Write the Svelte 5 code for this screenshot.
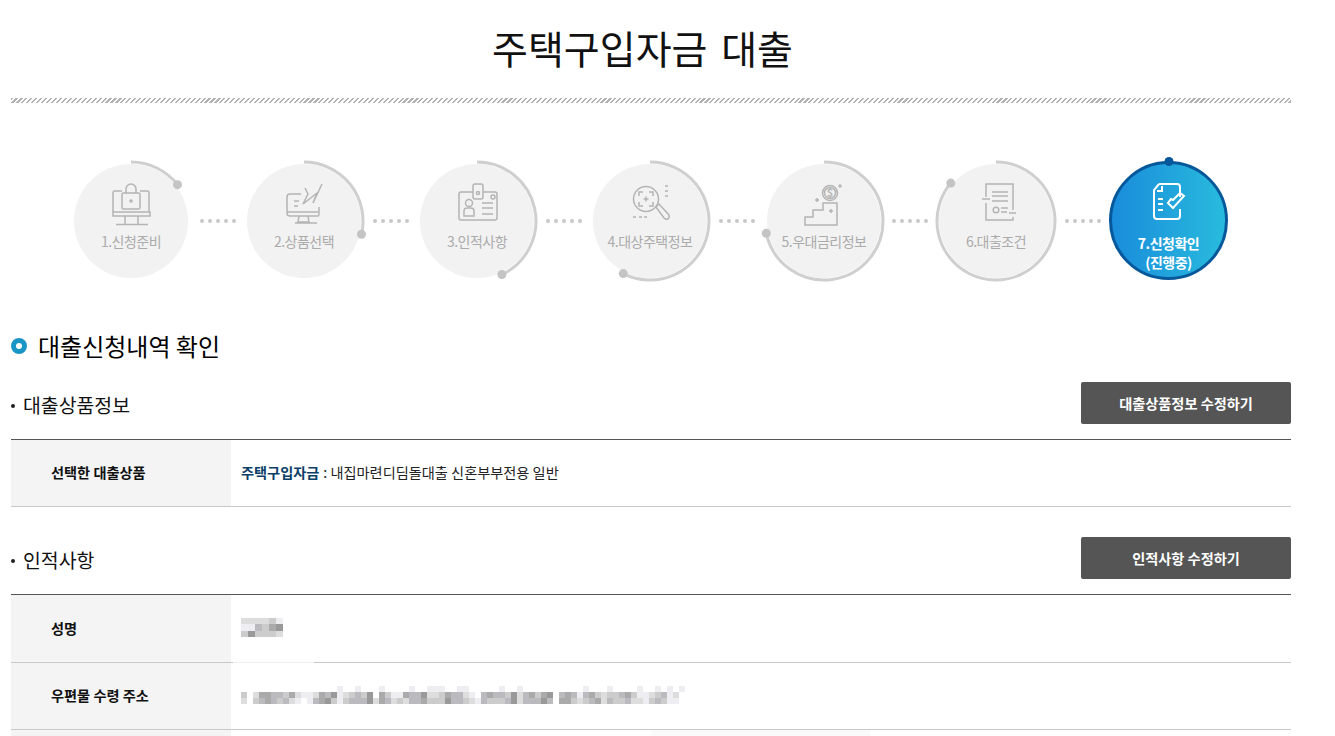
<script>
	const R = 59

	// angle is measured clockwise from the top of the circle
	function point(deg) {
		const a = (deg * Math.PI) / 180
		return [R * Math.sin(a), -R * Math.cos(a)]
	}

	function arcPath(deg) {
		const [x, y] = point(deg)
		return `M0 ${-R} A${R} ${R} 0 ${deg > 180 ? 1 : 0} 1 ${x.toFixed(2)} ${y.toFixed(2)}`
	}

	const steps = [
		{ label: '1.신청준비', deg: 52, before: 0, after: 12 },
		{ label: '2.상품선택', deg: 103, before: 11, after: 12 },
		{ label: '3.인적사항', deg: 155, before: 11, after: 12 },
		{ label: '4.대상주택정보', deg: 207, before: 11, after: 12 },
		{ label: '5.우대금리정보', deg: 258, before: 12, after: 11 },
		{ label: '6.대출조건', deg: 310, before: 11, after: 12 }
	]

	// mosaic of the masked personal data: 0 is white, 9 is the darkest grey
	function shade(c) {
		const n = Number(c)
		const v = 255 - n * 17
		return `rgb(${v},${v},${v + (n % 3 === 1 ? 4 : 0)})`
	}

	const nameMosaic = ['222231', '114356', '363332']
	const addressMosaic = [
		'000000000000000010010001000010011100110000010010000000000100010000100101010',
		'302554435211254612343605311544622354421045443624535604541453233453112341201',
		'203454342101456313444625423244533364432143334624446405532345243342213431100'
	]
</script>

<div class="page">
	<h1>주택구입자금 대출</h1>
	<div class="hatch"></div>

	<div class="steps">
		{#each steps as step, i}
			<div class="circle" style="margin-left: {step.before}px">
				<svg class="overlay" viewBox="-62 -62 124 124" width="124" height="124">
					<path class="arc" d={arcPath(step.deg)} />
					<circle class="knob" cx={point(step.deg)[0]} cy={point(step.deg)[1]} r="4.5" />
					<g class="icon">
						{#if i === 0}
							<path d="M-9 -30H-16Q-18 -30 -18 -28V-9M9 -30H16Q18 -30 18 -28V-9" />
							<rect x="-9" y="-28" width="18" height="16" rx="1.5" />
							<path d="M-5 -28V-32A5 5 0 0 1 5 -32V-28" />
							<circle cx="0" cy="-20" r="1" />
							<rect x="-18" y="-9" width="37" height="4" />
							<path d="M-6 -5V3M7 -5V3M-15 3.500H17" />
						{:else if i === 1}
							<path d="M-3 -27H-14Q-17 -27 -17 -24V-8Q-17 -5 -14 -5H14Q15 -5 15 -8V-14M-17 -9H14" />
							<path d="M-5 -5L-6 1H5L4 -5M-9 2H13M-10 -20H-5M-10 -15H-6" />
							<path d="M1 -33L4 -27L-1 -17L13 -28L9 -18L18 -37" />
						{:else if i === 2}
							<rect x="-18" y="-29" width="38" height="28" rx="2" />
							<rect x="-4" y="-37" width="10" height="15" rx="2" fill="#f2f2f2" />
							<circle cx="1" cy="-28" r="1.500" />
							<circle cx="16" cy="-24" r="2" />
							<circle cx="-8" cy="-18" r="3.500" />
							<path d="M-13 -5V-10Q-13 -13 -10 -13H-6Q-3 -13 -3 -10V-5ZM5 -18H16M5 -13H16M5 -7H16" />
						{:else if i === 3}
							<circle cx="-4" cy="-22" r="12.500" />
							<path d="M-11 -25V-29H-7M-1 -29H3V-25M3 -19V-15H-1M-7 -15H-11V-19M-6.500 -22H-1.500M-4 -24.500V-19.500" />
							<path d="M6 -14L9 -17L19 -6Q20 -4 18 -2Q16 -1 14 -3ZM-17 -4H-14M-11 -4H-8M-6 -4H-3M15 -35H18M15 -30H18M15 -25H18" />
						{:else if i === 4}
							<circle cx="6" cy="-28" r="7.500" />
							<circle cx="6" cy="-28" r="5.500" />
							<path d="M-19 4V-4H-11V-11H-1V-18H13V4ZM5 -10H9M7 -12V-8M-9 -21H-5M-7 -23V-19" />
							<text x="6" y="-24.500" text-anchor="middle" class="dollar">$</text>
							<circle cx="16" cy="-35" r="1" />
						{:else}
							<path d="M-10 -24V-37H17V-11M17 -4V-1H-10V-18M-14 -22H-6M-4 -29H12M-4 -25H12M-4 -20H12M5 -13H12M5 -9H11M13 -8H20" />
							<circle cx="0" cy="-11" r="2.800" />
						{/if}
					</g>
				</svg>
				<span class="label">{step.label}</span>
			</div>
			<div class="dots" style="margin-left: {step.after}px">
				<i></i><i></i><i></i><i></i><i></i>
			</div>
		{/each}

		<div class="circle current">
			<svg class="overlay" viewBox="-62 -62 124 124" width="124" height="124">
				<circle class="knob" cx="0" cy="-59.500" r="4.500" />
				<g class="icon white">
					<path d="M-10 -37H8Q11 -37 11 -34V-24M11 -12V-5Q11 -2 8 -2H-12Q-15 -2 -15 -5V-31L-10 -37M-7 -35V-30H-12M-11 -22H-6M-11 -17H-6M-11 -11H-6" />
					<path d="M-1 -18L4 -13L15 -25L11 -28L4 -21L2 -22Z" />
				</g>
			</svg>
			<span class="label">7.신청확인<br />(진행중)</span>
		</div>
	</div>

	<h2><span class="ring"></span>대출신청내역 확인</h2>

	<div class="sectionHead first">
		<h3>대출상품정보</h3>
		<button>대출상품정보 수정하기</button>
	</div>
	<div class="table">
		<div class="row">
			<div class="th">선택한 대출상품</div>
			<div class="td"><strong>주택구입자금</strong> : 내집마련디딤돌대출 신혼부부전용 일반</div>
		</div>
	</div>

	<div class="sectionHead">
		<h3>인적사항</h3>
		<button>인적사항 수정하기</button>
	</div>
	<div class="table">
		<div class="row nameRow">
			<div class="th">성명</div>
			<div class="td">
				<svg class="mosaic" width="42" height="19" shape-rendering="crispEdges">
					{#each nameMosaic as line, y}
						{#each line as c, x}
							<rect x={x * 7} y={y * 6.4} width="7" height="6.4" fill={shade(c)} />
						{/each}
					{/each}
				</svg>
			</div>
			<span class="lineGap"></span>
		</div>
		<div class="row">
			<div class="th">우편물 수령 주소</div>
			<div class="td">
				<svg class="mosaic" width="444" height="18" shape-rendering="crispEdges">
					{#each addressMosaic as line, y}
						{#each line as c, x}
							<rect x={x * 6} y={y * 6} width="6" height="6" fill={shade(c)} />
						{/each}
					{/each}
				</svg>
			</div>
		</div>
		<div class="row">
			<div class="th"></div>
			<div class="td"><span class="ghost"></span></div>
		</div>
	</div>
</div>

<style>
	:global(html), :global(body) {
		overflow: hidden;
		background: #fff;
	}

	.page {
		height: 736px;
		overflow: hidden;
		box-sizing: border-box;
		margin-left: 11px;
		width: 1280px;
		font-family: "Noto Sans CJK KR", "Noto Sans", sans-serif;
		color: #111;
	}

	h1 {
		margin: 0;
		height: 98px;
		line-height: 95px;
		padding-right: 17px;
		text-align: center;
		font-size: 39px;
		font-weight: 400;
		word-spacing: 5px;
	}

	.hatch {
		height: 5px;
		background: repeating-linear-gradient(135deg, #b2b2b2 0 1.500px, #fff 1.500px 3.500px);
	}

	.steps {
		display: flex;
		align-items: center;
		height: 119px;
		margin-top: 58px;
		padding-left: 63px;
	}

	.circle {
		position: relative;
		flex: none;
		box-sizing: border-box;
		width: 114px;
		height: 114px;
		padding-top: 68px;
		border-radius: 50%;
		background: #f2f2f2;
		text-align: center;
	}

	.overlay {
		position: absolute;
		left: -5px;
		top: -5px;
		overflow: visible;
	}

	.arc {
		fill: none;
		stroke: #cfcfcf;
		stroke-width: 3;
	}

	.knob {
		fill: #c4c4c4;
	}

	.icon {
		fill: none;
		stroke: #b4b4b4;
		stroke-width: 1.500;
	}

	.icon.white {
		stroke: #fff;
		stroke-width: 2;
	}

	.dollar {
		fill: #b4b4b4;
		stroke: none;
		font-size: 11px;
		font-weight: 700;
	}

	.label {
		display: block;
		position: relative;
		font-size: 14px;
		line-height: 18px;
		letter-spacing: -0.5px;
		color: #ababab;
		white-space: nowrap;
	}

	.dots {
		flex: none;
		display: flex;
		gap: 4px;
		width: 36px;
	}

	.dots i {
		width: 4px;
		height: 4px;
		border-radius: 50%;
		background: #c8c8c8;
	}

	.circle.current {
		width: 119px;
		height: 119px;
		margin-left: 8px;
		padding-top: 70px;
		border: 3px solid #06589b;
		background: linear-gradient(90deg, #1a8cdb, #28bbdd);
	}

	.current .overlay {
		left: -5.500px;
		top: -5.500px;
	}

	.current .knob {
		fill: #06589b;
	}

	.current .label {
		color: #fff;
		font-weight: 700;
		line-height: 19px;
	}

	h2 {
		display: flex;
		align-items: center;
		gap: 11px;
		box-sizing: border-box;
		margin: 50px 0 0;
		height: 32px;
		padding-bottom: 2px;
		font-size: 24px;
		font-weight: 400;
		color: #000;
	}

	.ring {
		box-sizing: border-box;
		width: 16px;
		height: 16px;
		margin-top: 2px;
		border: 5px solid #1a96c6;
		border-radius: 50%;
	}

	.sectionHead {
		display: flex;
		justify-content: space-between;
		align-items: center;
		height: 42px;
		margin: 30px 0 15px;
	}

	.sectionHead.first {
		margin-top: 20px;
	}

	h3 {
		margin: 0;
		padding: 3px 0 0 12px;
		position: relative;
		font-size: 19.400px;
		font-weight: 400;
		color: #111;
	}

	h3::before {
		content: "";
		position: absolute;
		left: 0;
		top: 52%;
		width: 4px;
		height: 4px;
		border-radius: 50%;
		background: #222;
	}

	button {
		width: 210px;
		height: 42px;
		padding: 0;
		border: none;
		border-radius: 2px;
		background: #555;
		color: #fff;
		font-family: inherit;
		font-size: 14.200px;
		font-weight: 700;
	}

	.table {
		border-top: 1px solid #555;
	}

	.row {
		position: relative;
		display: grid;
		grid-template-columns: 220px 1fr;
		height: 67px;
		box-sizing: border-box;
		border-bottom: 1px solid #c8c8c8;
		font-size: 14.200px;
	}

	.th {
		display: flex;
		align-items: center;
		padding: 0 0 2px 40px;
		background: #f4f4f4;
		font-weight: 700;
		color: #111;
	}

	.td {
		display: flex;
		align-items: center;
		gap: 4px;
		padding: 0 0 2px 10px;
		color: #222;
	}

	.td strong {
		color: #0c3f68;
	}

	.nameRow {
		height: 68px;
	}

	.lineGap {
		position: absolute;
		left: 222px;
		bottom: -1px;
		width: 81px;
		height: 1px;
		background: #eee;
	}

	.ghost {
		position: absolute;
		left: 640px;
		top: 0;
		width: 219px;
		height: 100%;
		background: #fafafa;
	}
</style>
